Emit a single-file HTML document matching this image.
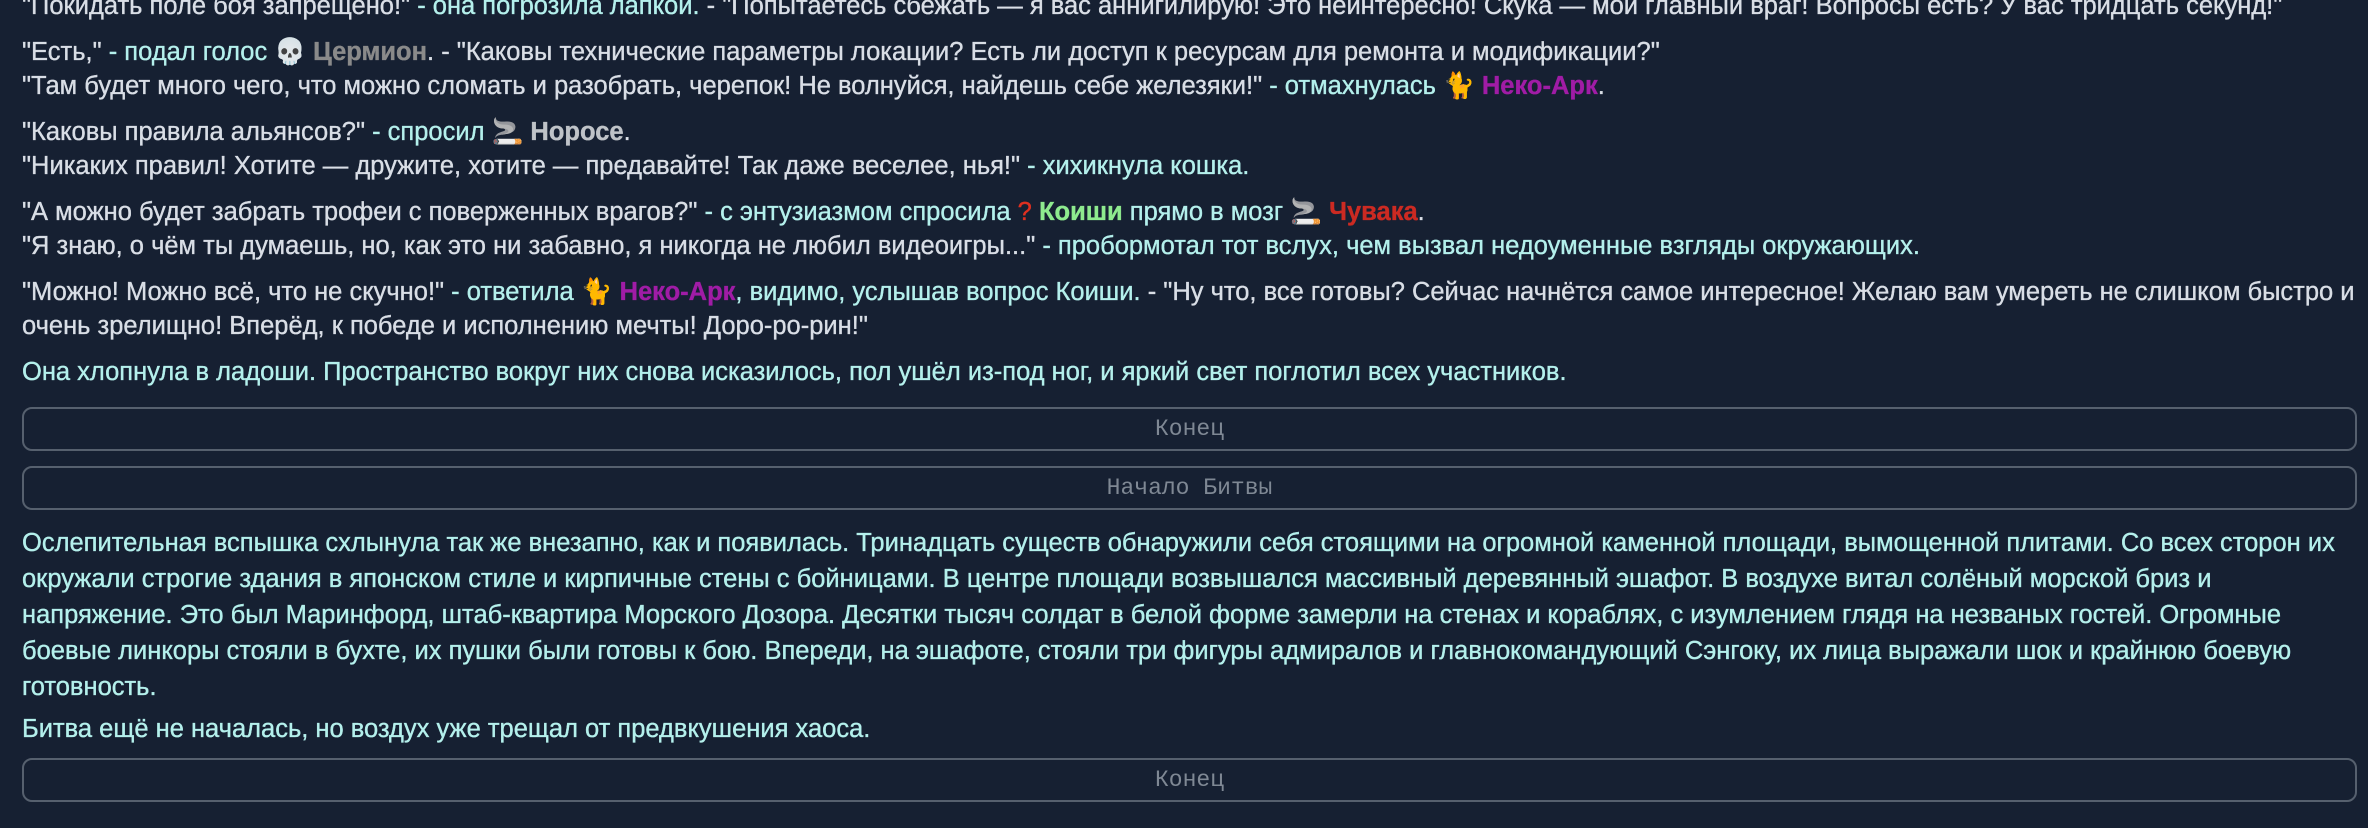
<!DOCTYPE html>
<html><head><meta charset="utf-8"><style>
html,body{margin:0;padding:0;background:#162032;width:2368px;height:828px;overflow:hidden}
body{font-family:"Liberation Sans","DejaVu Sans",sans-serif;font-size:25.5px;line-height:34px;color:#d9dee6;padding:0 22px;box-sizing:border-box;-webkit-text-stroke:0.35px currentColor}
p{margin:0 0 12px 0;white-space:nowrap}
.n{color:#b4f0ec}
.g{color:#8a8a8a;font-weight:bold}
.p{color:#a01ca6;font-weight:bold}
.k{color:#8eea8e;font-weight:bold}
.r{color:#cc2a22;font-weight:bold}
.s{color:#bfc3c8;font-weight:bold}
.box{height:40px;border:2px solid #56606e;border-radius:10px;margin:0 0 15px 0;text-align:center;font-family:"Liberation Mono",monospace;font-size:23px;line-height:40px;color:#7f8894;-webkit-text-stroke:0}
.wrap{white-space:normal;width:2330px}
</style></head><body>
<div style="position:absolute;top:-11px;left:22px;right:0">
<p>"Покидать поле боя запрещено!" <span class="n">- она погрозила лапкой.</span> - "Попытаетесь сбежать — я вас аннигилирую! Это неинтересно! Скука — мой главный враг! Вопросы есть? У вас тридцать секунд!"</p>
<p>"Есть," <span class="n">- подал голос</span> 💀 <span class="g">Цермион</span>. - "Каковы технические параметры локации? Есть ли доступ к ресурсам для ремонта и модификации?"<br>"Там будет много чего, что можно сломать и разобрать, черепок! Не волнуйся, найдешь себе железяки!" <span class="n">- отмахнулась</span> 🐈 <span class="p">Неко-Арк</span>.</p>
<p>"Каковы правила альянсов?" <span class="n">- спросил</span> 🚬 <span class="s">Норосе</span>.<br>"Никаких правил! Хотите — дружите, хотите — предавайте! Так даже веселее, нья!" <span class="n">- хихикнула кошка.</span></p>
<p>"А можно будет забрать трофеи с поверженных врагов?" <span class="n">- с энтузиазмом спросила</span> <span style="color:#e03020">?</span> <span class="k">Коиши</span> <span class="n">прямо в мозг</span> 🚬 <span class="r">Чувака</span>.<br>"Я знаю, о чём ты думаешь, но, как это ни забавно, я никогда не любил видеоигры..." <span class="n">- пробормотал тот вслух, чем вызвал недоуменные взгляды окружающих.</span></p>
<p>"Можно! Можно всё, что не скучно!" <span class="n">- ответила</span> 🐈 <span class="p">Неко-Арк</span><span class="n">, видимо, услышав вопрос Коиши.</span> - "Ну что, все готовы? Сейчас начнётся самое интересное! Желаю вам умереть не слишком быстро и<br>очень зрелищно! Вперёд, к победе и исполнению мечты! Доро-ро-рин!"</p>
<p class="n">Она хлопнула в ладоши. Пространство вокруг них снова исказилось, пол ушёл из-под ног, и яркий свет поглотил всех участников.</p>
</div>
<div style="position:absolute;top:407px;left:22px;width:2335px">
<div class="box">Конец</div>
<div class="box">Начало Битвы</div>
<p class="n wrap" style="line-height:36px;margin-top:8px;margin-bottom:7px">Ослепительная вспышка схлынула так же внезапно, как и появилась. Тринадцать существ обнаружили себя стоящими на огромной каменной площади, вымощенной плитами. Со всех сторон их окружали строгие здания в японском стиле и кирпичные стены с бойницами. В центре площади возвышался массивный деревянный эшафот. В воздухе витал солёный морской бриз и напряжение. Это был Маринфорд, штаб-квартира Морского Дозора. Десятки тысяч солдат в белой форме замерли на стенах и кораблях, с изумлением глядя на незваных гостей. Огромные боевые линкоры стояли в бухте, их пушки были готовы к бою. Впереди, на эшафоте, стояли три фигуры адмиралов и главнокомандующий Сэнгоку, их лица выражали шок и крайнюю боевую готовность.</p>
<p class="n" style="margin-bottom:12px">Битва ещё не началась, но воздух уже трещал от предвкушения хаоса.</p>
<div class="box">Конец</div>
</div>
</body></html>
